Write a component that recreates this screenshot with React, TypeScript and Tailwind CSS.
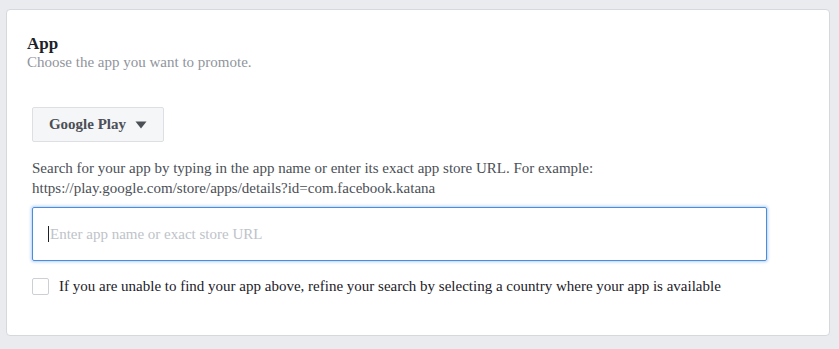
import { useState } from "react";

export default function App() {
  const [checked, setChecked] = useState(false);

  return (
    <div className="h-[349px] w-[839px] bg-[#e9ebee] pl-[6px] pt-[9px] font-['Liberation_Serif','Times_New_Roman',serif]">
      <div className="h-[327px] w-[824px] rounded-[4px] border border-[#d5d8dc] bg-white">
        <div className="pl-[20px] pt-[24px]">
          <h2 className="text-[17px] font-bold leading-[19px] text-[#1d2129]">App</h2>
          <p className="text-[15px] leading-[18px] text-[#90949c]">Choose the app you want to promote.</p>
        </div>

        <div className="pl-[25px] pt-[36px]">
          <button className="flex h-[35px] w-[132px] items-center justify-center gap-[9px] rounded-[2px] border border-[#dddfe2] bg-[#f5f6f7] text-[15px] font-bold text-[#4b4f56]">
            <span>Google Play</span>
            <svg width="12" height="8" viewBox="0 0 12 8" className="mt-[1px]">
              <path d="M0.5 0.5 H11.5 L6 7.5 Z" fill="#4b4f56" />
            </svg>
          </button>

          <p className="mt-[16px] w-[640px] text-[15px] leading-[20px] text-[#4b4f56]">
            Search for your app by typing in the app name or enter its exact app store URL. For example:
            https://play.google.com/store/apps/details?id=com.facebook.katana
          </p>

          <div className="mt-[9px] flex h-[54px] w-[735px] items-center rounded-[2px] border border-[#4a8ddc] pl-[15px] shadow-[0_0_3px_1px_rgba(88,150,240,0.45)]">
            <span className="mr-[1px] h-[16px] w-[1px] bg-[#1d2129]" />
            <span className="text-[15px] text-[#bec3c9]">Enter app name or exact store URL</span>
          </div>

          <label className="mt-[16px] flex items-center gap-[10px] text-[15px] leading-[18px] text-[#1d2129]">
            <span
              onClick={() => setChecked(!checked)}
              className="h-[17px] w-[17px] shrink-0 rounded-[2px] border border-[#ccd0d5] bg-white"
            />
            <span>
              If you are unable to find your app above, refine your search by selecting a country where your app is available
            </span>
          </label>
        </div>
      </div>
    </div>
  );
}
